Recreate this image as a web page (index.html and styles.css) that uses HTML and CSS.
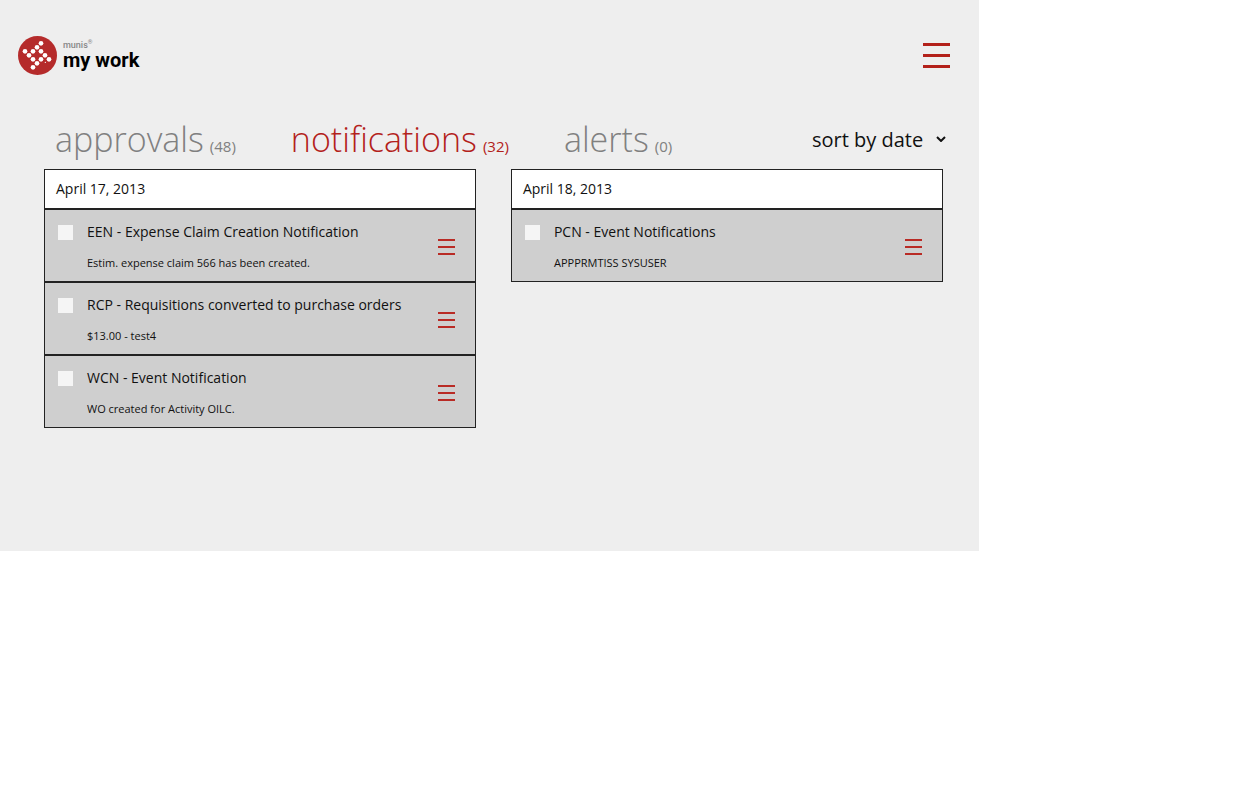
FILE: index.html
```html
<!DOCTYPE html>
<html lang="en">
<head>
  <meta charset="UTF-8" />
  <meta name="viewport" content="width=device-width, initial-scale=1.0" />
  <title>munis my work</title>
  <link rel="stylesheet" href="styles.css">
</head>
<body>

  <div class="app">
    <header class="header">
      <a class="logo" href="#">
        <svg class="logo-mark" viewBox="0 0 117 117" aria-hidden="true">
          <circle cx="58.5" cy="58.5" r="58.5" fill="#b52b2b" />
          <g fill="#fff">
            <circle cx="69" cy="22" r="7" />
            <circle cx="57" cy="34" r="7" />
            <circle cx="21" cy="46" r="7" />
            <circle cx="45" cy="46" r="7" />
            <circle cx="69" cy="46" r="7" />
            <circle cx="33" cy="58" r="7" />
            <circle cx="81" cy="58" r="7" />
            <circle cx="45" cy="70" r="7" />
            <circle cx="69" cy="70" r="7" />
            <circle cx="93" cy="70" r="7" />
            <circle cx="57" cy="82" r="7" />
            <circle cx="45" cy="94" r="7" />
            <circle cx="82" cy="79" r="2" />
          </g>
        </svg>
        <span class="logo-text">
          <span class="logo-brand">munis<sup>®</sup></span>
          <span class="logo-name">my work</span>
        </span>
      </a>
      <button class="menu-btn" type="button" aria-label="Menu">
        <svg width="27" height="25" viewBox="0 0 27 25"><path d="M0 1.5h27M0 12.5h27M0 23.5h27" stroke="#b3211a" stroke-width="3" /></svg>
      </button>
    </header>

    <div class="toolbar">
      <nav class="tabs">
        <a class="tab" href="#">approvals<span class="count">(48)</span></a>
        <a class="tab active" href="#">notifications<span class="count">(32)</span></a>
        <a class="tab" href="#">alerts<span class="count">(0)</span></a>
      </nav>
      <div class="sort">
        <select class="sort-select" aria-label="Sort">
          <option>sort by date</option>
        </select>
        <svg class="sort-arrow" width="10" height="6" viewBox="0 0 10 6" aria-hidden="true"><path d="M1 1l4 4 4-4" fill="none" stroke="#111" stroke-width="2" /></svg>
      </div>
    </div>

    <main class="columns">
      <section class="group">
        <h2 class="group-date">April 17, 2013</h2>
        <div class="item">
          <input class="check" type="checkbox" id="een">
          <div class="item-body">
            <label class="item-title" for="een">EEN - Expense Claim Creation Notification</label>
            <p class="item-text">Estim. expense claim 566 has been created.</p>
          </div>
          <button class="item-btn" type="button" aria-label="Actions">
            <svg width="17" height="16" viewBox="0 0 17 16"><path d="M0 1h17M0 8h17M0 15h17" stroke="#b92b25" stroke-width="2" /></svg>
          </button>
        </div>
        <div class="item">
          <input class="check" type="checkbox" id="rcp">
          <div class="item-body">
            <label class="item-title" for="rcp">RCP - Requisitions converted to purchase orders</label>
            <p class="item-text">$13.00 - test4</p>
          </div>
          <button class="item-btn" type="button" aria-label="Actions">
            <svg width="17" height="16" viewBox="0 0 17 16"><path d="M0 1h17M0 8h17M0 15h17" stroke="#b92b25" stroke-width="2" /></svg>
          </button>
        </div>
        <div class="item">
          <input class="check" type="checkbox" id="wcn">
          <div class="item-body">
            <label class="item-title" for="wcn">WCN - Event Notification</label>
            <p class="item-text">WO created for Activity OILC.</p>
          </div>
          <button class="item-btn" type="button" aria-label="Actions">
            <svg width="17" height="16" viewBox="0 0 17 16"><path d="M0 1h17M0 8h17M0 15h17" stroke="#b92b25" stroke-width="2" /></svg>
          </button>
        </div>
      </section>

      <section class="group">
        <h2 class="group-date">April 18, 2013</h2>
        <div class="item">
          <input class="check" type="checkbox" id="pcn">
          <div class="item-body">
            <label class="item-title" for="pcn">PCN - Event Notifications</label>
            <p class="item-text">APPPRMTISS SYSUSER</p>
          </div>
          <button class="item-btn" type="button" aria-label="Actions">
            <svg width="17" height="16" viewBox="0 0 17 16"><path d="M0 1h17M0 8h17M0 15h17" stroke="#b92b25" stroke-width="2" /></svg>
          </button>
        </div>
      </section>
    </main>
  </div>

</body>
</html>
```

FILE: styles.css
```css
* {
  box-sizing: border-box;
}

body {
  margin: 0;
  background: #fff;
  color: #111;
  font-family: "Segoe UI", "Open Sans", "Noto Sans", sans-serif;
}

.app {
  width: 78%;
  min-height: 68vh;
  background: #eee;
}

button {
  padding: 0;
  border: 0;
  background: none;
  cursor: pointer;
}

svg {
  display: block;
}

/* Header */
.header {
  display: flex;
  align-items: center;
  justify-content: space-between;
  padding: 36px 29px 0 18px;
}

.logo {
  display: flex;
  align-items: center;
  gap: 6px;
  color: #000;
  text-decoration: none;
}

.logo-mark {
  width: 39px;
  height: 39px;
}

.logo-text {
  display: flex;
  flex-direction: column;
  padding-bottom: 2px;
  font-family: Roboto, sans-serif;
}

.logo-brand {
  color: #888;
  font-size: 9px;
  font-weight: 500;
  line-height: 10px;
}

.logo-brand sup {
  font-size: 6px;
  line-height: 1;
}

.logo-name {
  font-size: 20px;
  font-weight: 700;
  line-height: 20px;
}

/* Tabs and sorting */
.toolbar {
  display: flex;
  align-items: center;
  justify-content: space-between;
  height: 60px;
  margin-top: 34px;
  padding: 0 33px 0 55px;
}

.tabs {
  display: flex;
  gap: 55px;
}

.tab {
  display: flex;
  align-items: baseline;
  gap: 6px;
  color: #808080;
  font-size: 34px;
  font-weight: 300;
  line-height: 50px;
  text-decoration: none;
  white-space: nowrap;
}

.tab.active {
  color: #b3211a;
}

.count {
  font-size: 15px;
  font-weight: 400;
  line-height: 20px;
}

.sort {
  display: flex;
  align-items: center;
  position: relative;
}

.sort-select {
  padding: 0 22px 0 0;
  border: 0;
  background: none;
  color: #111;
  font-family: inherit;
  font-size: 20px;
  appearance: none;
}

.sort-arrow {
  position: absolute;
  right: 0;
  pointer-events: none;
}

/* Notification lists */
.columns {
  display: grid;
  grid-template-columns: 1fr 1fr;
  align-items: start;
  gap: 35px;
  padding: 0 36px 40px 44px;
}

.group-date {
  margin: 0;
  padding: 0 11px;
  border: 1px solid #222;
  background: #fff;
  font-size: 14px;
  font-weight: 400;
  line-height: 38px;
}

.item {
  display: flex;
  align-items: center;
  gap: 14px;
  height: 73px;
  padding: 2px 20px 0 13px;
  border: 1px solid #222;
  background: #cfcfcf;
}

.check {
  flex: none;
  align-self: flex-start;
  width: 15px;
  height: 15px;
  margin: 13px 0 0;
  background: #f5f5f5;
  appearance: none;
}

.check:checked {
  background: #b3211a;
}

.item-body {
  flex: 1;
}

.item-title {
  display: block;
  font-size: 14px;
  line-height: 20px;
}

.item-text {
  margin: 13px 0 0;
  font-size: 11px;
  line-height: 16px;
}
```
